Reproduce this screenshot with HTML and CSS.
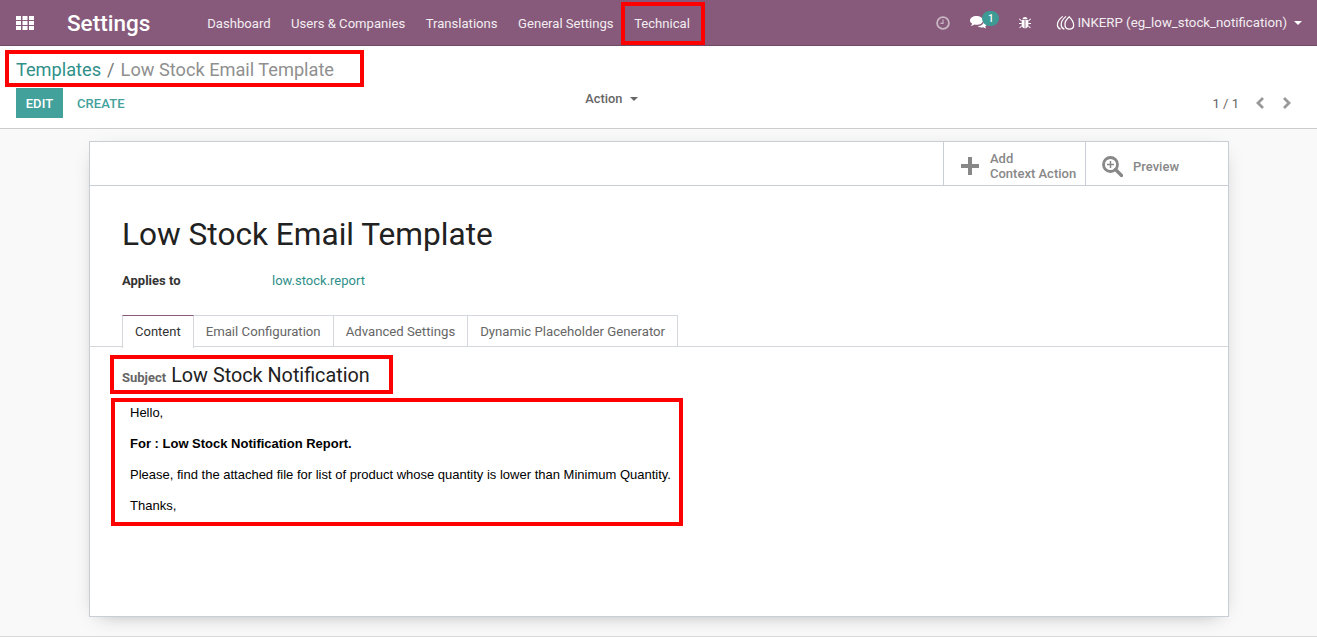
FILE: index.html
```html
<!DOCTYPE html>
<html lang="en">
<head>
  <meta charset="UTF-8" />
  <title>Low Stock Email Template</title>
  <link rel="stylesheet" href="styles.css">
</head>
<body>
  <header class="navbar">
    <div class="nav-left">
      <svg class="apps-icon" width="18" height="14" viewBox="0 0 18 14">
        <g fill="#fff">
          <rect x="0" y="0" width="5" height="4"/><rect x="6.500" y="0" width="5" height="4"/><rect x="13" y="0" width="5" height="4"/>
          <rect x="0" y="5" width="5" height="4"/><rect x="6.500" y="5" width="5" height="4"/><rect x="13" y="5" width="5" height="4"/>
          <rect x="0" y="10" width="5" height="4"/><rect x="6.500" y="10" width="5" height="4"/><rect x="13" y="10" width="5" height="4"/>
        </g>
      </svg>
      <span class="brand">Settings</span>
      <nav class="menu">
        <a>Dashboard</a>
        <a>Users &amp; Companies</a>
        <a>Translations</a>
        <a>General Settings</a>
        <a>Technical</a>
      </nav>
    </div>
    <div class="nav-right">
      <svg class="clock" width="14" height="14" viewBox="0 0 14 14">
        <circle cx="7" cy="7" r="5.900" fill="none" stroke="#c9b6c4" stroke-width="1.800"/>
        <path d="M7 3.500V7.400H4.400" fill="none" stroke="#c9b6c4" stroke-width="1.200"/>
      </svg>
      <span class="chat">
        <svg width="17" height="13" viewBox="0 0 17 13">
          <path d="M6.500 0C10 0 13 1.900 13 4.400S10 8.800 6.500 8.800C5.700 8.800 5 8.700 4.300 8.500C3.300 9.400 2 9.800 .8 9.900C1.500 9.200 2 8.300 2.100 7.500C.8 6.700 0 5.600 0 4.400C0 1.900 3 0 6.500 0Z" fill="#fff"/>
          <path d="M14 4.500C15.800 5.200 17 6.400 17 7.700C17 8.800 16.300 9.700 15.200 10.400C15.300 11.100 15.700 11.800 16.300 12.400C15.300 12.300 14.200 12 13.400 11.200C12.800 11.400 12.200 11.500 11.500 11.500C9.900 11.500 8.500 11 7.600 10.100C11.200 10 14.300 7.800 14 4.500Z" fill="#fff"/>
        </svg>
        <span class="badge">1</span>
      </span>
      <svg class="bug" width="12" height="13" viewBox="0 0 12 13">
        <g fill="#fff">
          <path d="M3.500 3.200C3.700 1.800 4.700 .9 6 .9S8.300 1.800 8.500 3.200Z"/>
          <path d="M2.700 4H5.600V12.400C3.900 12.200 2.700 10.800 2.700 9Z"/>
          <path d="M9.300 4H6.400V12.400C8.100 12.200 9.300 10.800 9.300 9Z"/>
          <path d="M.6 2.600 2.800 4.600 2.300 5.200 0 3.200ZM11.400 2.600 9.200 4.600 9.700 5.200 12 3.200ZM0 7H2.700V7.900H0ZM9.300 7H12V7.900H9.300ZM2.500 9.600 3 10.300 .9 12.300 .2 11.700ZM9.500 9.600 9 10.300 11.100 12.300 11.800 11.700Z"/>
        </g>
      </svg>
      <span class="company">
        <svg width="19" height="16" viewBox="0 0 20 16">
          <g fill="none" stroke="#fff" stroke-width="1.300">
            <path d="M14 1.500C11 4 9 7 9.500 10.500C9.800 13 11.500 14.500 14 14.500C16.500 14.500 18.400 13 18.600 10.500C18.800 7.500 16.500 4 14 1.500Z"/>
            <path d="M10.500 1C7.500 3.500 5 7 5.500 10.500C5.800 12.500 7 14 8.800 14.500"/>
            <path d="M7 1C4 3.500 1 7 1.500 10.500C1.800 12.500 3 14 4.800 14.500"/>
          </g>
        </svg>
        INKERP (eg_low_stock_notification)
      </span>
      <span class="caret caret-white"></span>
    </div>
  </header>

  <section class="control-panel">
    <div class="breadcrumb">
      <a>Templates</a><span class="sep">/</span><span class="current">Low Stock Email Template</span>
    </div>
    <div class="cp-row">
      <div class="cp-buttons">
        <button class="btn-edit">EDIT</button>
        <button class="btn-create">CREATE</button>
      </div>
      <div class="cp-action">Action <span class="caret caret-grey"></span></div>
      <div class="pager">
        <span class="pager-text">1 / 1</span>
        <svg width="10" height="14" viewBox="0 0 10 14"><path d="M8 2 3 7l5 5" fill="none" stroke="#999" stroke-width="2.800"/></svg>
        <svg width="10" height="14" viewBox="0 0 10 14"><path d="M2 2l5 5-5 5" fill="none" stroke="#999" stroke-width="2.800"/></svg>
      </div>
    </div>
  </section>

  <main class="content">
    <div class="sheet">
      <div class="button-box">
        <div class="stat-btn stat-add">
          <svg width="18" height="18" viewBox="0 0 18 18"><path d="M7 0h4v7h7v4h-7v7H7v-7H0V7h7Z" fill="#888" /></svg>
          <span>Add<br>Context Action</span>
        </div>
        <div class="stat-btn stat-preview">
          <svg width="21" height="21" viewBox="0 0 21 21">
            <circle cx="8.500" cy="8.500" r="7" fill="none" stroke="#888" stroke-width="2.800"/>
            <path d="M13.500 13.500 19.500 19.500" stroke="#888" stroke-width="3.400" stroke-linecap="round"/>
            <path d="M8.500 5v7M5 8.500h7" stroke="#888" stroke-width="1.500"/>
          </svg>
          <span>Preview</span>
        </div>
      </div>

      <div class="sheet-body">
        <h1>Low Stock Email Template</h1>
        <div class="field-row">
          <label>Applies to</label>
          <a>low.stock.report</a>
        </div>
      </div>

      <ul class="tabs">
        <li class="active">Content</li>
        <li>Email Configuration</li>
        <li>Advanced Settings</li>
        <li>Dynamic Placeholder Generator</li>
      </ul>

      <div class="tab-pane">
        <div class="subject"><label>Subject</label><span>Low Stock Notification</span></div>
        <div class="mail-body">
          <p>Hello,</p>
          <p><strong>For : Low Stock Notification Report.</strong></p>
          <p>Please, find the attached file for list of product whose quantity is lower than Minimum Quantity.</p>
          <p>Thanks,</p>
        </div>
      </div>
    </div>
  </main>

  <!-- red annotation boxes drawn over the screenshot -->
  <div class="mark mark-technical"></div>
  <div class="mark mark-breadcrumb"></div>
  <div class="mark mark-subject"></div>
  <div class="mark mark-body"></div>
</body>
</html>
```

FILE: styles.css
```css
* {
  box-sizing: border-box;
}

html, body {
  height: 637px;
  overflow: hidden;
}

body {
  position: relative;
  margin: 0;
  font-family: Roboto, "Noto Sans", sans-serif;
  font-size: 13px;
  color: #4c4c4c;
  background: #fff;
}

.navbar {
  display: flex;
  justify-content: space-between;
  align-items: center;
  height: 46px;
  padding: 0 15px 0 16px;
  background: #875a7b;
  border-bottom: 1px solid #6f4a65;
  color: #fff;
}

.nav-left, .nav-right, .menu {
  display: flex;
  align-items: center;
}

.brand {
  margin-left: 33px;
  font-size: 22.500px;
  font-weight: 500;
  line-height: 46px;
}

.menu {
  margin-left: 57px;
  gap: 20.500px;
}

.menu a {
  padding-top: 2px;
  color: #f3edf1;
  font-size: 13.100px;
}

.clock {
  margin-right: 20px;
}

.chat {
  position: relative;
  display: flex;
  margin-right: 32px;
}

.badge {
  position: absolute;
  left: 12px;
  top: -5px;
  width: 17px;
  height: 15px;
  border-radius: 8px;
  background: #3d9a94;
  color: #fff;
  font-size: 10px;
  font-weight: 500;
  line-height: 15px;
  text-align: center;
}

.bug {
  margin-right: 25px;
}

.company {
  display: flex;
  align-items: center;
  gap: 2px;
  color: #f3edf1;
  font-size: 13.250px;
}

.caret {
  display: inline-block;
  width: 0;
  height: 0;
  border-left: 4px solid transparent;
  border-right: 4px solid transparent;
}

.caret-white {
  margin-left: 7px;
  border-top: 4px solid #fff;
}

.caret-grey {
  margin-left: 4px;
  vertical-align: 2px;
  border-top: 4px solid #666;
}

.control-panel {
  height: 83px;
  padding: 9px 16px 0;
  border-bottom: 1px solid #ccc;
  background: #fff;
}

.breadcrumb {
  height: 33px;
  font-size: 18.200px;
  line-height: 29px;
}

.breadcrumb a {
  color: #2f8f89;
}

.breadcrumb .sep {
  margin: 0 6px;
  color: #777;
}

.breadcrumb .current {
  color: #8f8f8f;
}

.cp-row {
  display: grid;
  grid-template-columns: 1fr 1fr 1fr;
  align-items: center;
  height: 30px;
}

.cp-buttons {
  display: flex;
  align-items: center;
}

.cp-buttons button {
  border: none;
  font-family: inherit;
  font-size: 13px;
  font-weight: 500;
  height: 30px;
  letter-spacing: .1px;
}

.btn-edit {
  width: 47px;
  padding: 0;
  background: #43a19c;
  color: #fff;
}

.btn-create {
  margin-left: 5px;
  padding: 0 9px;
  background: none;
  color: #43a19c;
}

.cp-action {
  margin-left: 141px;
  margin-top: -9px;
  font-size: 12.800px;
  font-weight: 500;
  color: #666;
}

.pager {
  display: flex;
  justify-content: flex-end;
  align-items: center;
  gap: 17px;
  padding-right: 9px;
  margin-top: -1px;
}

.pager-text {
  margin-right: -1px;
  padding-top: 2px;
  font-size: 13px;
  color: #666;
}

.content {
  height: 508px;
  padding: 12px 88px 0 89px;
  background: #f9f9f9;
  border-bottom: 1px solid #d9d9d9;
}

.sheet {
  height: 476px;
  background: #fff;
  border: 1px solid #c9ced6;
  box-shadow: 0 5px 20px -10px rgba(0, 0, 0, .4);
}

.button-box {
  display: flex;
  justify-content: flex-end;
  height: 44px;
  border-bottom: 1px solid #c9ced6;
}

.stat-btn {
  display: flex;
  align-items: center;
  padding-top: 5px;
  border-left: 1px solid #c9ced6;
  color: #888;
  font-size: 13px;
  font-weight: 500;
  line-height: 15px;
}

.stat-add {
  width: 142px;
  padding-left: 17px;
  gap: 11px;
}

.stat-preview {
  width: 143px;
  padding-left: 16px;
  gap: 10px;
}

.sheet-body {
  padding: 30px 32px 0;
}

h1 {
  margin: 0;
  font-size: 31.600px;
  font-weight: 400;
  line-height: 38px;
  color: #212121;
}

.field-row {
  display: flex;
  margin-top: 18px;
  font-size: 13px;
  line-height: 18px;
}

.field-row label {
  width: 150px;
  font-weight: 700;
  color: #333;
}

.field-row a {
  color: #2f8f89;
}

.tabs {
  display: flex;
  margin: 25px 0 0;
  padding: 0 0 0 32px;
  list-style: none;
  height: 32px;
  border-bottom: 1px solid #d4d7dc;
}

.tabs li {
  height: 32px;
  padding: 0 12px;
  border: 1px solid #d4d7dc;
  border-left: none;
  font-size: 13.200px;
  line-height: 31px;
  color: #666;
}

.tabs li.active {
  height: 33px;
  border-left: 1px solid #d4d7dc;
  border-top: 1px solid #875a7b;
  border-bottom: none;
  background: #fff;
  font-size: 13px;
  color: #333;
}

.tab-pane {
  padding: 0 32px;
}

.subject {
  display: flex;
  align-items: baseline;
  gap: 5px;
  height: 58px;
  padding-top: 15px;
  font-size: 19.800px;
  line-height: 28px;
  color: #212121;
}

.subject label {
  font-size: 13px;
  font-weight: 700;
  color: #666;
}

.mail-body {
  padding-left: 8px;
  font-family: "Liberation Sans", Arial, sans-serif;
  font-size: 13px;
  line-height: 15px;
  color: #000;
}

.mail-body p {
  margin: 0 0 16px;
}

.mark {
  position: absolute;
  border: 4px solid #f00;
}

.mark-technical {
  left: 621px;
  top: 2px;
  width: 84px;
  height: 43px;
}

.mark-breadcrumb {
  left: 5px;
  top: 50px;
  width: 359px;
  height: 37px;
}

.mark-subject {
  left: 110px;
  top: 355px;
  width: 283px;
  height: 39px;
}

.mark-body {
  left: 111px;
  top: 398px;
  width: 572px;
  height: 128px;
}
```
